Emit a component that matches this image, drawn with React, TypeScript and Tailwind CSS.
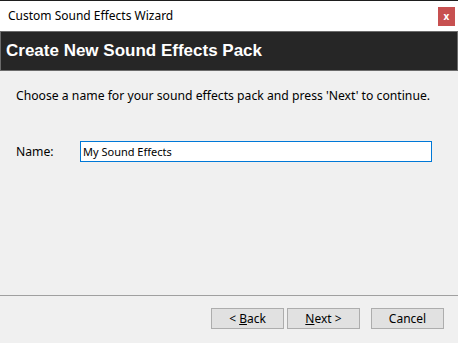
import React from "react";

const WizardButton = ({
  children,
  className = "",
}: {
  children: React.ReactNode;
  className?: string;
}) => (
  <button
    className={`h-[21px] w-[73px] border border-[#adadad] bg-[#e1e1e1] text-[12px] leading-none text-black ${className}`}
  >
    {children}
  </button>
);

export default function App() {
  return (
    <div className="flex h-[343px] w-[458px] flex-col bg-[#f0f0f0] font-['Segoe_UI','Noto_Sans',sans-serif] text-black">
      <div className="flex h-[31px] items-center justify-between border-t border-[#1e1e1e] bg-white pl-2 pr-[3px]">
        <span className="text-[12px]">Custom Sound Effects Wizard</span>
        <div className="flex h-[19px] w-[17px] items-center justify-center bg-[#c75050] text-[10px] font-bold leading-none text-white">
          x
        </div>
      </div>

      <div className="flex h-[40px] items-center border border-[#6b6b6b] bg-[#262626] px-[5px]">
        <h1 className="font-['Liberation_Sans',Arial,sans-serif] text-[17px] font-bold text-white">
          Create New Sound Effects Pack
        </h1>
      </div>

      <div className="flex-1 px-4 pt-[16px]">
        <p className="text-[12.2px]">
          Choose a name for your sound effects pack and press 'Next' to continue.
        </p>
        <div className="mt-[36px] flex items-center">
          <label className="w-16 text-[12.2px]">Name:</label>
          <input
            defaultValue="My Sound Effects"
            className="h-[21px] w-[352px] border border-[#0078d7] bg-white px-[2px] text-[11px] outline-none"
          />
        </div>
      </div>

      <div className="border-t border-[#a0a0a0]" />
      <div className="flex h-[47px] items-start justify-end pr-[14px] pt-[12px]">
        <WizardButton>
          &lt; <span className="underline">B</span>ack
        </WizardButton>
        <WizardButton className="ml-[3px]">
          <span className="underline">N</span>ext &gt;
        </WizardButton>
        <WizardButton className="ml-[11px]">Cancel</WizardButton>
      </div>
    </div>
  );
}
